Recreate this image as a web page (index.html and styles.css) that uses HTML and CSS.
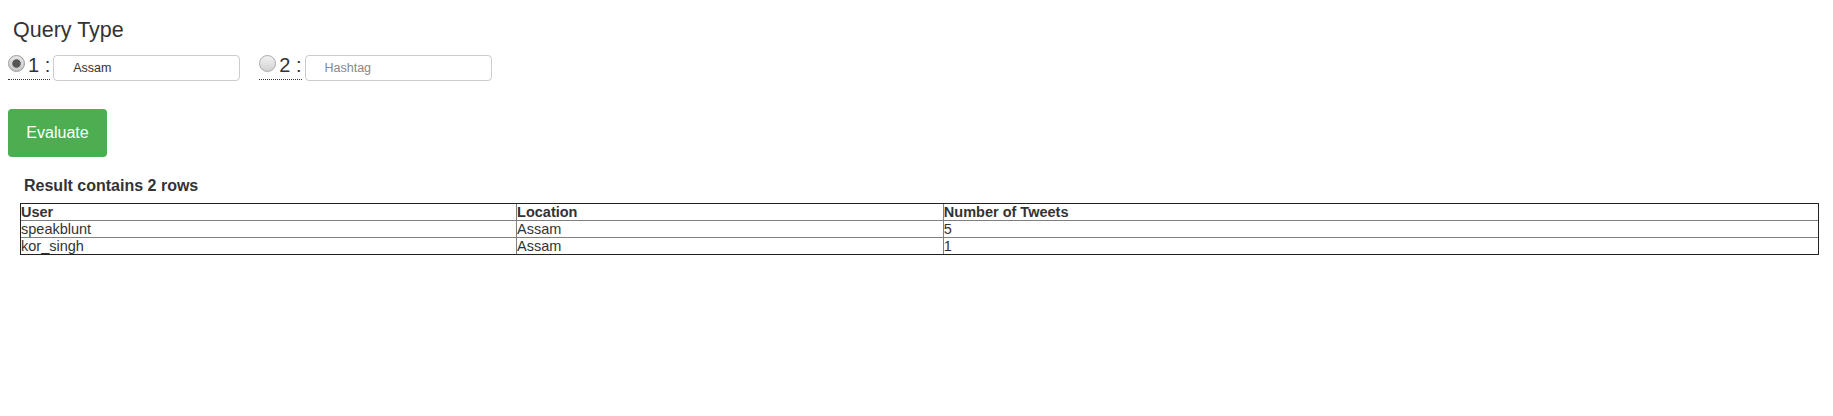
FILE: index.html
```html
<!DOCTYPE html>
<html>
<head>
<meta charset="utf-8">
<title>Query</title>
<link rel="stylesheet" href="styles.css">
</head>
<body>
<div class="page">
  <h4 class="title">Query Type</h4>
  <form class="query-row">
    <label class="opt"><input type="radio" name="qt" class="radio" checked><abbr class="opt-text" title="Location">1 :</abbr></label>
    <input type="text" class="field" value="Assam">
    <label class="opt opt-second"><input type="radio" name="qt" class="radio"><abbr class="opt-text" title="Hashtag">2 :</abbr></label>
    <input type="text" class="field" placeholder="Hashtag">
  </form>
  <button type="button" class="btn-evaluate">Evaluate</button>
  <h5 class="result-title">Result contains 2 rows</h5>
  <div class="results">
    <table class="result-table">
      <thead>
        <tr><th class="col-user">User</th><th class="col-location">Location</th><th>Number of Tweets</th></tr>
      </thead>
      <tbody>
        <tr><td>speakblunt</td><td>Assam</td><td>5</td></tr>
        <tr><td>kor_singh</td><td>Assam</td><td>1</td></tr>
      </tbody>
    </table>
  </div>
</div>
</body>
</html>
```

FILE: styles.css
```css
html, body {
  margin: 0;
  padding: 0;
  background: #fff;
}

body {
  font-family: "Liberation Sans", Arial, sans-serif;
  color: #333;
}

.page {
  padding: 8px;
}

.title {
  margin: 11px 0 0 0;
  padding-left: 5px;
  font-size: 21.5px;
  line-height: 22px;
  font-weight: normal;
  color: #333;
}

.query-row {
  display: flex;
  align-items: flex-start;
  margin: 14px 0 0 0;
}

.opt {
  display: flex;
  align-items: flex-start;
  margin-top: -1px;
  padding-bottom: 3px;
  border-bottom: 1px dotted #333;
  font-size: 20px;
  line-height: 22px;
  cursor: pointer;
}

.opt-second {
  margin-left: 19px;
}

.opt-text {
  text-decoration: none;
  border: 0;
}

.radio {
  appearance: none;
  -webkit-appearance: none;
  box-sizing: border-box;
  flex: 0 0 17px;
  width: 17px;
  height: 17px;
  margin: 1px 3px 0 0;
  border: 1px solid #aaa;
  border-radius: 50%;
  background: linear-gradient(#f2f2f2, #d2d2d2);
}

.radio:checked {
  border-color: #999;
  background: radial-gradient(circle, #555 0, #555 3.8px, transparent 4.6px), linear-gradient(#e6e6e6, #c6c6c6);
}

.field {
  box-sizing: border-box;
  width: 187px;
  height: 26px;
  margin: 0 0 0 3px;
  padding: 0 6px 0 19px;
  border: 1px solid #ccc;
  border-radius: 4px;
  font-family: "Liberation Sans", Arial, sans-serif;
  font-size: 12.5px;
  color: #333;
  background: #fff;
}

.field::placeholder {
  color: #888;
}

.btn-evaluate {
  display: block;
  box-sizing: border-box;
  width: 99px;
  height: 48px;
  margin: 28px 0 0 0;
  padding: 0;
  border: 0;
  border-radius: 4px;
  background: #4cae50;
  color: #fff;
  font-family: "Liberation Sans", Arial, sans-serif;
  font-size: 16px;
  cursor: pointer;
}

.result-title {
  margin: 20px 0 0 0;
  padding-left: 16px;
  font-size: 16px;
  line-height: 18px;
  font-weight: bold;
  color: #333;
}

.results {
  margin-top: 8px;
  padding: 0 6px 0 12px;
}

.result-table {
  width: 100%;
  border-collapse: separate;
  border-spacing: 0;
  border: 1px solid #222;
  font-size: 14.5px;
  line-height: 16px;
  color: #333;
}

.result-table th,
.result-table td {
  padding: 0 1px 0 0;
  text-align: left;
  vertical-align: top;
}

.result-table th {
  font-weight: bold;
}

.result-table .col-user {
  width: 27.55%;
}

.result-table .col-location {
  width: 23.75%;
}

.result-table th + th,
.result-table td + td {
  border-left: 1px solid #808080;
}

.result-table tbody td {
  border-top: 1px solid #808080;
}
```
